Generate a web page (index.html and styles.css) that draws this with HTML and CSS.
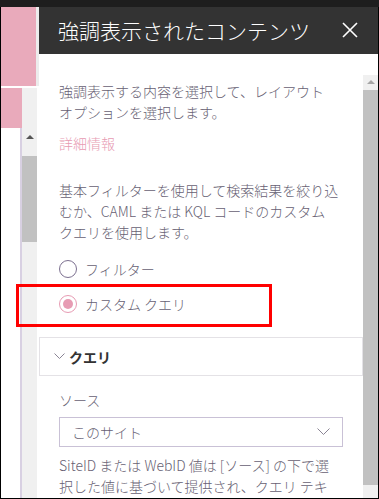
FILE: index.html
```html
<!DOCTYPE html>
<html lang="ja">
<head>
    <meta charset="UTF-8">
    <meta name="viewport" content="width=device-width, initial-scale=1.0">
    <title>強調表示されたコンテンツ</title>
    <link rel="stylesheet" href="styles.css">
</head>
<body>
    <div class="frame">
        <div class="top-bar"></div>
        <div class="main">
            <!-- 左側のページ部分 -->
            <div class="side">
                <div class="side-top"></div>
                <div class="side-row">
                    <div class="side-left">
                        <div class="side-pink"></div>
                        <div class="side-white"></div>
                    </div>
                    <div class="scrollbar scrollbar-left">
                        <div class="arrow"></div>
                        <div class="thumb"></div>
                    </div>
                </div>
            </div>

            <!-- プロパティ パネル -->
            <div class="panel">
                <div class="panel-header">
                    <h1>強調表示されたコンテンツ</h1>
                    <button class="close-btn" aria-label="閉じる">
                        <svg width="16" height="16" viewBox="0 0 16 16">
                            <path d="M1 1 L15 15 M15 1 L1 15" stroke="#fff" stroke-width="1.6" fill="none"/>
                        </svg>
                    </button>
                </div>
                <div class="panel-body">
                    <div class="content">
                        <p class="text intro">強調表示する内容を選択して、レイアウト<br>オプションを選択します。</p>
                        <a class="link" href="#">詳細情報</a>
                        <p class="text desc">基本フィルターを使用して検索結果を絞り込<br>むか、CAML または KQL コードのカスタム<br>クエリを使用します。</p>
                        <div class="radios">
                            <label class="radio">
                                <span class="circle"></span>
                                <span class="radio-label">フィルター</span>
                            </label>
                            <label class="radio checked">
                                <span class="circle"></span>
                                <span class="radio-label">カスタム クエリ</span>
                            </label>
                        </div>
                        <div class="section">
                            <svg class="chev" width="11" height="7" viewBox="0 0 11 7">
                                <path d="M0.5 0.5 L5.5 5.5 L10.5 0.5" stroke="#8a8494" stroke-width="1" fill="none"/>
                            </svg>
                            <span class="section-title">クエリ</span>
                        </div>
                        <div class="field">
                            <div class="field-label">ソース</div>
                            <div class="dropdown">
                                <span>このサイト</span>
                                <svg width="13" height="8" viewBox="0 0 13 8">
                                    <path d="M0.5 0.5 L6.5 6.5 L12.5 0.5" stroke="#8a8494" stroke-width="1" fill="none"/>
                                </svg>
                            </div>
                            <p class="text help">SiteID または WebID 値は [ソース] の下で選<br>択した値に基づいて提供され、クエリ テキ</p>
                        </div>
                    </div>
                    <div class="scrollbar scrollbar-right">
                        <div class="arrow"></div>
                        <div class="thumb"></div>
                    </div>
                </div>
            </div>
        </div>
    </div>
    <!-- 注釈の赤枠 -->
    <div class="highlight-box"></div>
</body>
</html>
```

FILE: styles.css
```css
* {
    margin: 0;
    padding: 0;
    box-sizing: border-box;
}

body {
    font-family: "Noto Sans CJK JP", "Liberation Sans", sans-serif;
    font-weight: 300;
    width: 379px;
    height: 499px;
    overflow: hidden;
    background: #fff;
    position: relative;
}

.frame {
    width: 379px;
    height: 499px;
    border: 1px solid #000;
    border-top: none;
    display: flex;
    flex-direction: column;
}

.top-bar {
    height: 7px;
    background: #1e1e1e;
    margin: 0 -1px;
}

.main {
    flex: 1;
    display: flex;
    min-height: 0;
}

/* 左側 */
.side {
    width: 38px;
    display: flex;
    flex-direction: column;
}

.side-top {
    height: 79px;
    background: #e9aabb;
    border-right: 3px solid #ececec;
}

.side-row {
    flex: 1;
    display: flex;
    margin-top: 2px;
}

.side-left {
    width: 21px;
    display: flex;
    flex-direction: column;
}

.side-pink {
    height: 40px;
    background: #e9aabb;
}

.side-white {
    flex: 1;
    border-right: 2px solid #d8d0e2;
}

.scrollbar {
    width: 15px;
    background: #f0f0f0;
    display: flex;
    flex-direction: column;
    align-items: center;
}

.scrollbar .arrow {
    width: 0;
    height: 0;
    border-left: 4px solid transparent;
    border-right: 4px solid transparent;
    border-bottom: 4px solid #555;
}

.scrollbar .thumb {
    width: 100%;
    background: #c1c1c1;
}

.scrollbar-left .arrow {
    margin-top: 47px;
}

.scrollbar-left .thumb {
    margin-top: 17px;
    height: 86px;
}

/* パネル */
.panel {
    flex: 1;
    display: flex;
    flex-direction: column;
    min-width: 0;
}

.panel-header {
    height: 47px;
    background: #333;
    display: flex;
    align-items: center;
    justify-content: space-between;
    padding: 0 20px 0 19px;
}

.panel-header h1 {
    color: #fff;
    font-size: 21px;
    font-weight: 300;
    line-height: 28px;
    margin-top: -2px;
}

.close-btn {
    background: none;
    border: none;
    display: flex;
    cursor: pointer;
    margin-top: -2px;
}

.panel-body {
    flex: 1;
    display: flex;
    min-height: 0;
}

.content {
    width: 324px;
    padding-top: 27px;
}

.text {
    font-size: 14px;
    line-height: 21px;
    color: #675f73;
    padding: 0 20px;
}

.link {
    display: block;
    font-size: 14px;
    line-height: 21px;
    color: #e79bb3;
    text-decoration: none;
    margin: 10px 20px 0;
}

.desc {
    margin-top: 26px;
}

.radios {
    display: flex;
    flex-direction: column;
    gap: 15px;
    padding: 0 20px;
    margin-top: 16px;
}

.radio {
    display: flex;
    align-items: center;
    height: 20px;
    font-size: 14px;
    color: #675f73;
}

.circle {
    width: 18px;
    height: 18px;
    border: 1px solid #7c7090;
    border-radius: 50%;
    margin-right: 8px;
    display: flex;
    align-items: center;
    justify-content: center;
}

.radio.checked .circle {
    border-color: #e79bb3;
}

.radio.checked .circle::after {
    content: "";
    width: 10px;
    height: 10px;
    border-radius: 50%;
    background: #e79bb3;
}

.section {
    margin-top: 23px;
    height: 39px;
    border: 1px solid #e4e2e6;
    display: flex;
    align-items: center;
    padding-left: 14px;
    gap: 4px;
}

.section-title {
    font-size: 14px;
    font-weight: bold;
    color: #333;
}

.field {
    margin-top: 14px;
}

.field-label {
    font-size: 14px;
    line-height: 21px;
    color: #675f73;
    padding: 0 20px;
}

.dropdown {
    margin: 6px 20px 0;
    height: 30px;
    border: 1px solid #c9c1d6;
    display: flex;
    align-items: center;
    justify-content: space-between;
    padding: 0 12px 0 12px;
    font-size: 14px;
    color: #675f73;
}

.help {
    margin-top: 8px;
}

.scrollbar-right {
    margin-top: 21px;
}

.scrollbar-right .arrow {
    margin-top: 5px;
    border-bottom-color: #a6a6a6;
}

.scrollbar-right .thumb {
    margin-top: 6px;
    height: 395px;
}

/* 赤枠 */
.highlight-box {
    position: absolute;
    left: 16px;
    top: 284px;
    width: 256px;
    height: 43px;
    border: 3px solid #ff0000;
}
```
